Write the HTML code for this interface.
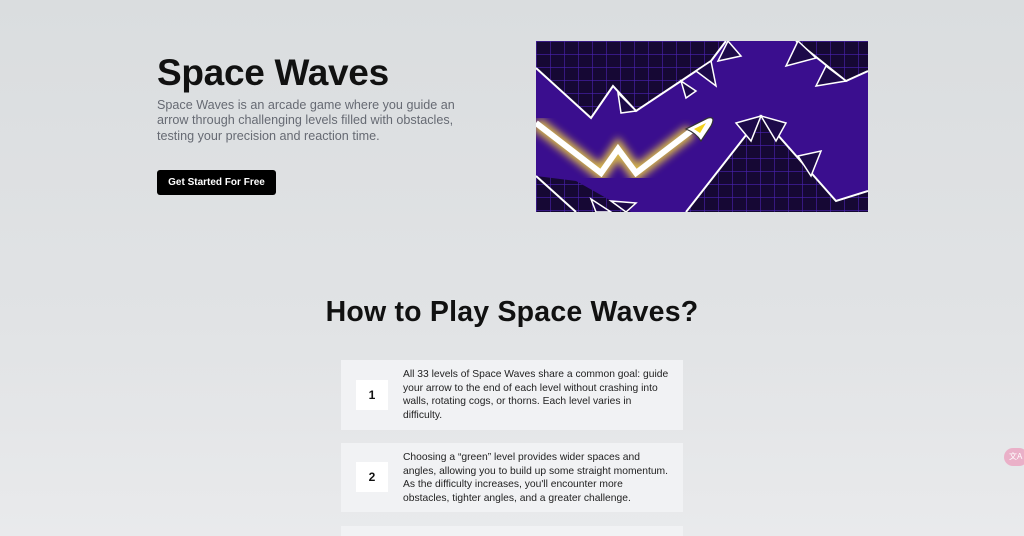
<!DOCTYPE html>
<html><head><meta charset="utf-8"><style>
*{margin:0;padding:0;box-sizing:border-box}
html,body{width:1024px;height:536px;overflow:hidden}
html{background:#e3e5e7}
body{font-family:"Liberation Sans",Arial,sans-serif;background:linear-gradient(180deg,#dadddf 0%,#e1e3e5 60%,#e9eaec 100%);position:relative}
h1{position:absolute;left:157px;top:52px;font-size:37px;font-weight:700;color:#111;letter-spacing:-0.3px}
p.lead{position:absolute;left:157px;top:98px;width:310px;font-size:12.6px;line-height:15.3px;color:#666a73}
.btn{position:absolute;left:157px;top:170px;width:119px;height:25px;background:#000;color:#fff;border-radius:3px;font-size:10px;font-weight:700;text-align:center;line-height:25px}
.game{position:absolute;left:536px;top:41px;width:332px;height:171px}
h2{position:absolute;left:0;width:1024px;top:296px;text-align:center;font-size:28.5px;font-weight:700;color:#111;letter-spacing:0.2px}
.card{position:absolute;left:341px;width:342px;background:#f1f2f4}
.num{position:absolute;left:15px;width:32px;height:30px;background:#fff;font-size:12px;font-weight:700;text-align:center;line-height:30px;color:#111}
.card p{position:absolute;left:62px;width:280px;white-space:nowrap;font-size:10.3px;line-height:13.6px;color:#222}
.tr{position:absolute;left:1004px;top:448px;width:24px;height:18px;border-radius:9px;background:#eab0c8;color:#fff;font-size:8px;line-height:18px;padding-left:5px}
</style></head><body>
<h1>Space Waves</h1>
<p class="lead">Space Waves is an arcade game where you guide an arrow through challenging levels filled with obstacles, testing your precision and reaction time.</p>
<div class="btn">Get Started For Free</div>
<svg class="game" viewBox="0 0 332 171" preserveAspectRatio="none">
<defs><pattern id="g" width="14" height="13" patternUnits="userSpaceOnUse"><rect width="14" height="13" fill="#160834"/><path d="M0 0H14M0 0V13" stroke="#4a22b0" stroke-width="1.2"/></pattern>
<filter id="b"><feGaussianBlur stdDeviation="4"/></filter></defs>
<rect width="332" height="171" fill="url(#g)"/>
<polygon points="0,27 55,77 77,45 100,70 145,40 175,20 190,0 260,0 310,40 332,30 332,150 300,160 225,75 150,171 95,171 40,140 0,135" fill="#3a0e8e"/>
<polyline points="0,27 55,77 77,45 100,70 145,40 175,20 190,0" fill="none" stroke="#fff" stroke-width="2"/>
<polyline points="260,0 310,40 332,30" fill="none" stroke="#fff" stroke-width="2"/>
<polyline points="150,171 225,75 300,160 332,150" fill="none" stroke="#fff" stroke-width="2"/>
<polyline points="0,135 40,171" fill="none" stroke="#fff" stroke-width="2"/>
<g fill="#1d0a4a" stroke="#fff" stroke-width="1.5">
<polygon points="82,52 100,70 85,72"/><polygon points="145,40 160,50 150,57"/><polygon points="160,30 175,20 180,45"/><polygon points="192,0 205,15 182,20"/><polygon points="262,0 250,25 280,17"/><polygon points="290,25 310,40 280,45"/>
<polygon points="200,82 225,75 215,100"/><polygon points="225,75 250,82 240,100"/><polygon points="262,115 285,110 275,135"/>
<polygon points="55,158 75,171 60,171"/><polygon points="75,160 90,171 100,162"/>
</g>
<polyline points="0,82 65,132 82,108 100,132 155,90" fill="none" stroke="#ffe23a" stroke-width="14" filter="url(#b)" opacity=".8"/>
<polyline points="0,82 65,132 82,108 100,132 155,90" fill="none" stroke="#fff" stroke-width="6"/>
<path d="M150,88 L172,77 Q180,75 175,85 L165,100 Q160,92 150,88Z" fill="#fff" stroke="#333" stroke-width="1.2"/>
<path d="M158,88 L170,82 L164,92Z" fill="#f3d21a"/>
</svg>
<h2>How to Play Space Waves?</h2>
<div class="card" style="top:360px;height:70px"><div class="num" style="top:20px">1</div><p style="top:8px">All 33 levels of Space Waves share a common goal: guide<br>your arrow to the end of each level without crashing into<br>walls, rotating cogs, or thorns. Each level varies in<br>difficulty.</p></div>
<div class="card" style="top:443px;height:69px"><div class="num" style="top:19px">2</div><p style="top:8px">Choosing a “green” level provides wider spaces and<br>angles, allowing you to build up some straight momentum.<br>As the difficulty increases, you'll encounter more<br>obstacles, tighter angles, and a greater challenge.</p></div>
<div class="card" style="top:526px;height:10px"></div>
<div class="tr">文A</div>
</body></html>
